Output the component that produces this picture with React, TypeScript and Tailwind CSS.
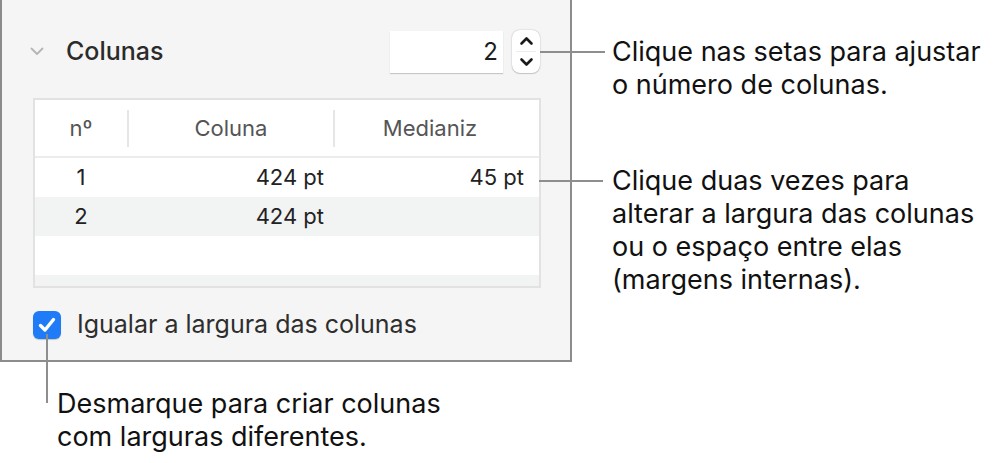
import React from "react";

const Chevron = ({ dir }: { dir: "up" | "down" }) => (
  <svg width="15" height="10" viewBox="0 0 15 10">
    {dir === "up" ? (
      <path d="M2.5 7.5 L7.5 2.5 L12.5 7.5" fill="none" stroke="#1a1a1a" strokeWidth="2.6" strokeLinecap="round" strokeLinejoin="round" />
    ) : (
      <path d="M2.5 2.5 L7.5 7.5 L12.5 2.5" fill="none" stroke="#1a1a1a" strokeWidth="2.6" strokeLinecap="round" strokeLinejoin="round" />
    )}
  </svg>
);

export default function App() {
  const font = { fontFamily: "Inter, 'Noto Sans', sans-serif" };
  return (
    <div className="relative w-[998px] h-[463px] bg-white overflow-hidden" style={font}>
      <div className="flex">
        {/* Panel */}
        <div className="w-[572px] h-[362px] shrink-0 bg-[#f5f5f5] border-l-2 border-r-2 border-b-2 border-[#8c8c8c] flex flex-col">
          {/* Title row */}
          <div className="mt-[30px] h-[43px] flex items-center">
            <svg width="14" height="9" viewBox="0 0 14 9" className="ml-[28px]">
              <path d="M1.5 1.5 L7 7 L12.5 1.5" fill="none" stroke="#b5b5b5" strokeWidth="1.8" strokeLinecap="round" strokeLinejoin="round" />
            </svg>
            <span className="ml-[22px] text-[25px] font-medium text-[#2b2b2b]">Colunas</span>
            <div className="ml-auto w-[113px] h-[42px] bg-white shadow-[0_1px_1px_rgba(0,0,0,0.18)] flex items-center justify-end pr-[5px] text-[24px] text-[#1d1d1d]">
              2
            </div>
            <div className="ml-[9px] mr-[30px] w-[28px] h-[43px] bg-white rounded-[8px] shadow-[0_0_1.5px_rgba(0,0,0,0.3),0_1px_1px_rgba(0,0,0,0.15)] flex flex-col items-center justify-center">
              <div className="h-[20px] flex items-center"><Chevron dir="up" /></div>
              <div className="w-[20px] h-px bg-[#ececec]" />
              <div className="h-[20px] flex items-center"><Chevron dir="down" /></div>
            </div>
          </div>

          {/* Table */}
          <div className="ml-[31px] mt-[25px] w-[508px] h-[190px] border-2 border-[#e2e2e2] bg-white flex flex-col overflow-hidden text-[22px]">
            <div className="h-[58px] shrink-0 grid grid-cols-[92px_206px_1fr] items-center text-[#555555] border-b-2 border-[#ececec]">
              <div className="text-center">nº</div>
              <div className="text-center border-l-2 border-[#e6e6e6] h-[37px] flex items-center justify-center">Coluna</div>
              <div className="text-center border-l-2 border-[#e6e6e6] h-[37px] flex items-center justify-center pr-[14px]">Medianiz</div>
            </div>
            <div className="h-[39px] shrink-0 grid grid-cols-[92px_206px_1fr] items-center text-[#222]">
              <div className="text-center">1</div>
              <div className="text-right pr-[9px]">424 pt</div>
              <div className="text-right pr-[15px]">45 pt</div>
            </div>
            <div className="h-[39px] shrink-0 grid grid-cols-[92px_206px_1fr] items-center text-[#222] bg-[#f2f3f3]">
              <div className="text-center">2</div>
              <div className="text-right pr-[9px]">424 pt</div>
              <div />
            </div>
            <div className="h-[39px] shrink-0 bg-white" />
            <div className="flex-1 bg-[#f2f3f3]" />
          </div>

          {/* Checkbox row */}
          <div className="mt-[18px] ml-[31px] flex items-center">
            <div className="w-[28px] h-[28px] rounded-[6px] bg-[#1f7cf6] shadow-[0_1px_1px_rgba(0,0,0,0.2)] flex items-center justify-center">
              <svg width="20" height="18" viewBox="0 0 20 18">
                <path d="M3.5 9.5 L8 14 L16.5 3.5" fill="none" stroke="white" strokeWidth="3.4" strokeLinecap="round" strokeLinejoin="round" />
              </svg>
            </div>
            <span className="ml-[16px] text-[25px] text-[#2e2e2e]">Igualar a largura das colunas</span>
          </div>
        </div>

        {/* Right annotations */}
        <div className="ml-[40px] text-[27px] leading-[33px] text-[#111]">
          <div className="mt-[35px]">
            <div>Clique nas setas para ajustar</div>
            <div>o número de colunas.</div>
          </div>
          <div className="mt-[63px]">
            <div>Clique duas vezes para</div>
            <div>alterar a largura das colunas</div>
            <div>ou o espaço entre elas</div>
            <div>(margens internas).</div>
          </div>
        </div>
      </div>

      {/* Bottom annotation */}
      <div className="ml-[57px] mt-[25px] text-[27px] leading-[33px] text-[#111]">
        <div>Desmarque para criar colunas</div>
        <div>com larguras diferentes.</div>
      </div>

      {/* Connector lines */}
      <div className="absolute left-[540px] top-[51px] w-[65px] h-[2px] bg-[#8e8e8e]" />
      <div className="absolute left-[539px] top-[180px] w-[64px] h-[2px] bg-[#8e8e8e]" />
      <div className="absolute left-[46px] top-[334px] w-[2px] h-[69px] bg-[#8e8e8e]" />
    </div>
  );
}
